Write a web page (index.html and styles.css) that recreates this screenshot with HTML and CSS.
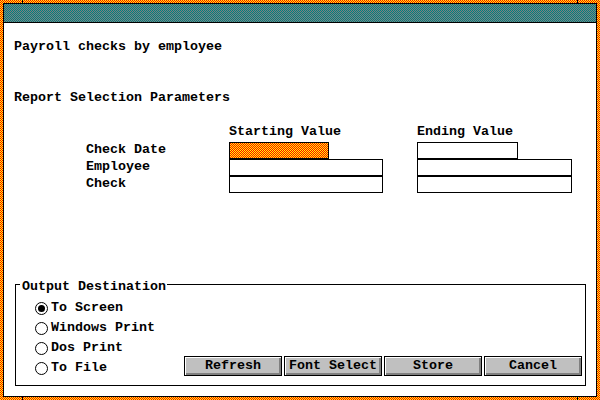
FILE: index.html
```html
<!DOCTYPE html>
<html>
<head>
<meta charset="utf-8">
<link rel="stylesheet" href="styles.css">
</head>
<body>
<div class="frame">
  <span class="tick tick-tl"></span>
  <span class="tick tick-tr"></span>
  <span class="tick tick-bl"></span>
  <span class="tick tick-br"></span>
  <div class="window">
    <div class="titlebar"></div>
    <div class="content">
      <div class="heading first">Payroll checks by employee</div>
      <div class="heading second">Report Selection Parameters</div>
      <div class="params">
        <div></div>
        <div class="colhead">Starting Value</div>
        <div class="colhead">Ending Value</div>

        <div class="label">Check Date</div>
        <div class="field short focus"></div>
        <div class="field short end"></div>

        <div class="label">Employee</div>
        <div class="field long"></div>
        <div class="field long end"></div>

        <div class="label">Check</div>
        <div class="field long"></div>
        <div class="field long end"></div>
      </div>
      <fieldset class="group">
        <legend>Output Destination</legend>
        <div class="group-body">
          <div class="radios">
            <div class="radio"><span class="dot checked"></span>To Screen</div>
            <div class="radio"><span class="dot"></span>Windows Print</div>
            <div class="radio"><span class="dot"></span>Dos Print</div>
            <div class="radio"><span class="dot"></span>To File</div>
          </div>
          <div class="buttons">
            <div class="btn">Refresh</div>
            <div class="btn">Font Select</div>
            <div class="btn">Store</div>
            <div class="btn">Cancel</div>
          </div>
        </div>
      </fieldset>
    </div>
  </div>
</div>
</body>
</html>
```
FILE: styles.css
```css
html, body {
  margin: 0;
  padding: 0;
  background: #fff;
}
body {
  font-family: "Liberation Mono", "DejaVu Sans Mono", monospace;
  font-weight: bold;
  font-size: 13.33px;
  color: #000;
}
.frame,
.field.focus {
  background: #ff8000 url("data:image/svg+xml;utf8,<svg xmlns='http://www.w3.org/2000/svg' width='2' height='2' shape-rendering='crispEdges'><rect width='2' height='2' fill='%23ffff00'/><rect width='1' height='1' fill='%23ff0000'/><rect x='1' y='1' width='1' height='1' fill='%23ff0000'/></svg>") 0 0 / 2px 2px repeat;
}
.frame {
  position: relative;
  width: 600px;
  height: 400px;
  box-sizing: border-box;
  padding: 3px;
}
.tick {
  position: absolute;
  width: 1px;
  height: 3px;
  background: #000;
}
.tick-tl { top: 0; left: 22px; }
.tick-tr { top: 0; left: 577px; }
.tick-bl { bottom: 0; left: 22px; }
.tick-br { bottom: 0; left: 577px; }
.window {
  height: 100%;
  box-sizing: border-box;
  border: 1px solid #000;
  background: #fff;
  display: flex;
  flex-direction: column;
}
.titlebar {
  height: 18px;
  border-bottom: 1px solid #000;
  background: #408080 url("data:image/svg+xml;utf8,<svg xmlns='http://www.w3.org/2000/svg' width='2' height='2' shape-rendering='crispEdges'><rect width='2' height='2' fill='%23808080'/><rect width='1' height='1' fill='%23008080'/><rect x='1' y='1' width='1' height='1' fill='%23008080'/></svg>") 0 0 / 2px 2px repeat;
}
.content {
  flex: 1;
  display: flex;
  flex-direction: column;
  padding: 0 10px 10px 10px;
}
.heading {
  line-height: 16px;
  white-space: pre;
}
.heading.first { margin-top: 16px; }
.heading.second { margin-top: 35px; }
.params {
  margin-top: 18px;
  margin-left: 72px;
  display: grid;
  grid-template-columns: 143px 188px auto;
}
.colhead {
  line-height: 16px;
  margin-bottom: 2px;
}
.label {
  line-height: 17px;
  height: 17px;
  margin-top: -1px;
}
.field {
  box-sizing: border-box;
  height: 17px;
  border: 1px solid #000;
  background: #fff;
}
.field.short { width: 100px; }
.field.long { width: 154px; }
.field.short.end { width: 101px; }
.field.long.end { width: 155px; }
.group {
  margin: auto 0 0 1px;
  border: 1px solid #000;
  padding: 4px 3px 7px 19px;
  min-width: 0;
}
.group legend {
  padding: 6px 1px 0 2px;
  margin-left: -15px;
  line-height: 14px;
}
.group-body {
  display: flex;
  align-items: flex-end;
}
.radios {
  display: flex;
  flex-direction: column;
}
.radio {
  display: flex;
  align-items: center;
  height: 20px;
  line-height: 20px;
}
.dot {
  position: relative;
  box-sizing: border-box;
  width: 13px;
  height: 13px;
  border: 1px solid #000;
  border-radius: 50%;
  margin-right: 3px;
  background: #fff;
}
.dot.checked::after {
  content: "";
  position: absolute;
  left: 2px;
  top: 2px;
  width: 7px;
  height: 7px;
  border-radius: 50%;
  background: #000;
}
.buttons {
  margin-left: auto;
  display: flex;
  gap: 2px;
  margin-bottom: 2px;
}
.btn {
  box-sizing: border-box;
  width: 98px;
  height: 20px;
  border: 1px solid #000;
  background: #c0c0c0;
  box-shadow: inset 1px 1px 0 #fff, inset -2px -2px 0 #808080;
  text-align: center;
  line-height: 18px;
  white-space: pre;
}
```
